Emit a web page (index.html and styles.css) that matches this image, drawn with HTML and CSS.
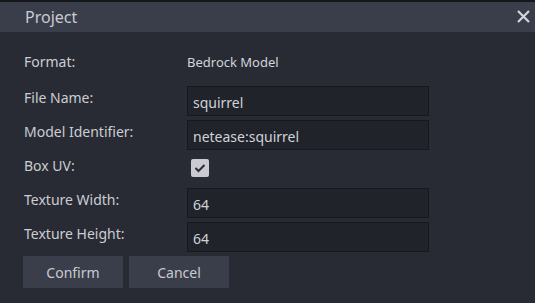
FILE: index.html
```html
<!DOCTYPE html>
<html lang="en">
<head>
    <meta charset="UTF-8">
    <meta name="viewport" content="width=device-width, initial-scale=1.0">
    <title>Project</title>
    <link rel="stylesheet" href="styles.css">
</head>
<body>
    <div class="dialog">
        <div class="dialog-title">
            <span>Project</span>
            <svg class="close" width="13" height="13" viewBox="0 0 13 13">
                <path d="M1 1 L12 12 M12 1 L1 12" stroke="#d4d6dc" stroke-width="2.2" fill="none"/>
            </svg>
        </div>

        <div class="form">
            <div class="row row-format">
                <label>Format:</label>
                <span class="value">Bedrock Model</span>
            </div>
            <div class="row">
                <label>File Name:</label>
                <input class="field" type="text" value="squirrel">
            </div>
            <div class="row">
                <label>Model Identifier:</label>
                <input class="field" type="text" value="netease:squirrel">
            </div>
            <div class="row">
                <label>Box UV:</label>
                <span class="checkbox">
                    <svg width="12" height="10" viewBox="0 0 12 10">
                        <path d="M1.5 5 L4.5 8 L10.5 2" stroke="#2b2e36" stroke-width="2" fill="none"/>
                    </svg>
                </span>
            </div>
            <div class="row">
                <label>Texture Width:</label>
                <input class="field" type="text" value="64">
            </div>
            <div class="row">
                <label>Texture Height:</label>
                <input class="field" type="text" value="64">
            </div>

            <div class="buttons">
                <button>Confirm</button>
                <button>Cancel</button>
            </div>
        </div>
    </div>
</body>
</html>
```

FILE: styles.css
```css
* {
    margin: 0;
    padding: 0;
    box-sizing: border-box;
}

body {
    font-family: 'Noto Sans', sans-serif;
    font-size: 14px;
    background: #282b33;
    color: #cbcdd3;
    width: 535px;
    height: 303px;
    overflow: hidden;
}

.dialog {
    border-top: 2px solid #16171b;
    height: 100%;
}

.dialog-title {
    height: 30px;
    background: #3a3e4a;
    display: flex;
    align-items: center;
    justify-content: space-between;
    padding: 0 5px 1px 25px;
    font-size: 16px;
    color: #c9cbd1;
}

.form {
    padding: 18px 24px 0 24px;
    display: flex;
    flex-direction: column;
    gap: 4px;
}

.row {
    display: flex;
    align-items: flex-start;
    height: 30px;
}

.row-format {
    height: 32px;
}

.row label {
    width: 163px;
    line-height: 20px;
    padding-top: 2px;
}

.value {
    font-size: 13px;
    line-height: 20px;
    padding-top: 2px;
    color: #d2d4da;
}

.field {
    width: 242px;
    height: 30px;
    background: #21232b;
    border: 1px solid #17181d;
    color: #d0d2d8;
    font-family: inherit;
    font-size: 14px;
    padding: 2px 5px 0 5px;
    outline: none;
}

.checkbox {
    width: 18px;
    height: 18px;
    margin: 5px 0 0 4px;
    background: #cacbd2;
    border-radius: 2px;
    display: flex;
    align-items: center;
    justify-content: center;
}

.buttons {
    display: flex;
    gap: 6px;
    margin-left: -1px;
}

.buttons button {
    width: 100px;
    height: 32px;
    background: #3a3e4a;
    border: none;
    color: #c9cbd1;
    font-family: inherit;
    font-size: 14px;
}
```
